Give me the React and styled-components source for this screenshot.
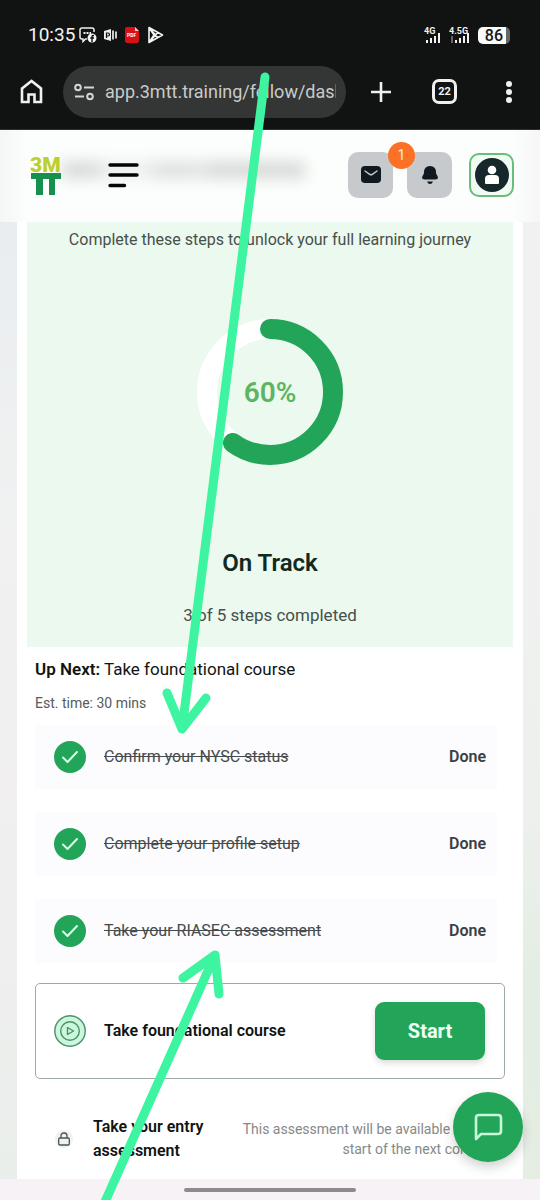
import React from "react";
import styled, { createGlobalStyle } from "styled-components";

const green = "#22a558";
const mint = "#3df5a0";

const GlobalStyle = createGlobalStyle`
  *, *::before, *::after { box-sizing: border-box; }
  body { margin: 0; font-family: Roboto, "Liberation Sans", sans-serif; color: #101413; }
  button, input { font: inherit; }
  p, h1, h2, ul { margin: 0; padding: 0; }
`;

const Page = styled.div`
  position: relative;
  min-height: 100vh;
  display: flex;
  flex-direction: column;
  overflow: hidden;
  background: #f1f1f1;
`;

const StatusBar = styled.div`
  display: flex;
  align-items: center;
  gap: 7px;
  height: 60px;
  padding: 10px 30px 0 28px;
  background: #111212;
  color: #f4f4f4;
  svg { flex: none; }
`;

const Clock = styled.time`
  font-size: 19px;
  line-height: 24px;
  margin-right: -3px;
`;

const StatusEnd = styled.div`
  display: flex;
  align-items: center;
  gap: 8px;
  margin-left: auto;
`;

const Battery = styled.div`
  display: flex;
  align-items: center;
  height: 17px;
  padding: 0 7px;
  border-radius: 5px;
  background: linear-gradient(to right, #fafafa 86%, #666 86%);
  color: #161616;
  font-size: 16px;
  line-height: 17px;
  font-weight: 500;
`;

const BrowserBar = styled.div`
  display: flex;
  align-items: center;
  height: 70px;
  padding: 0 20px 6px;
  border-bottom: 1px solid #2c302e;
  background: #111212;
  color: #f0f0f0;
`;

const PlainButton = styled.button`
  display: flex;
  align-items: center;
  justify-content: center;
  flex: none;
  width: ${(p) => p.$width}px;
  height: 30px;
  padding: 0;
  border: 0;
  background: none;
  color: inherit;
`;

const AddressPill = styled.label`
  display: flex;
  align-items: center;
  gap: 10px;
  flex: 1;
  min-width: 0;
  height: 52px;
  margin: 0 23px 0 20px;
  padding: 0 10px 0 11px;
  border-radius: 26px;
  background: #333634;
  svg { flex: none; }
`;

const Address = styled.input`
  flex: 1;
  min-width: 0;
  padding: 0;
  border: 0;
  outline: 0;
  background: none;
  color: #c9cbca;
  font-size: 18px;
  line-height: 24px;
`;

const BrowserActions = styled.div`
  display: flex;
  align-items: center;
  gap: 40px;
`;

const TabCount = styled.span`
  display: flex;
  align-items: center;
  justify-content: center;
  width: 25px;
  height: 25px;
  border: 3px solid #f0f0f0;
  border-radius: 7px;
  font-size: 11px;
  font-weight: 700;
`;

const AppHeader = styled.header`
  position: relative;
  display: flex;
  align-items: center;
  height: 92px;
  padding: 0 26px 2px 30px;
  background: linear-gradient(to right, #f5f6f5, #fbfefc 28px, #fbfefc calc(100% - 28px), #f6f6f6);
  &::before {
    content: "";
    position: absolute;
    left: 62px;
    top: 31px;
    width: 45%;
    height: 18px;
    background: linear-gradient(to right, #d9dcda 0 12%, #eef0ef 20% 34%, #dfe2e0 40% 52%, #e6e8e7 56%, #d9dcda 62% 100%);
    filter: blur(7px);
  }
`;

const Logo = styled.svg`
  position: relative;
  flex: none;
`;

const MenuButton = styled(PlainButton)`
  position: relative;
  margin-left: 44px;
  color: #050505;
`;

const HeaderActions = styled.div`
  position: relative;
  display: flex;
  align-items: center;
  gap: 14px;
  margin-left: auto;
`;

const TileButton = styled.button`
  position: relative;
  display: flex;
  align-items: center;
  justify-content: center;
  width: 45px;
  height: 46px;
  padding: 0;
  border: 0;
  border-radius: 10px;
  background: #c6cacc;
`;

const AvatarButton = styled(TileButton)`
  height: 44px;
  margin-left: 3px;
  border: 2px solid #6dbb7b;
  background: #f0fbf3;
`;

const Badge = styled.span`
  position: absolute;
  z-index: 1;
  top: -10px;
  right: -22px;
  width: 27px;
  height: 27px;
  border-radius: 50%;
  background: #fb7125;
  color: #ffe9dc;
  font-size: 14px;
  line-height: 27px;
  text-align: center;
`;

const Content = styled.main`
  flex: 1;
  padding: 0 17px;
  background:
    linear-gradient(to bottom, #e9edf0, #f0f1f1 30%, #f1eff0 60%, #eaeeeb) left / 17px 100% no-repeat,
    linear-gradient(to bottom, #f1f1f1, #eef0ee 60%, #e3ede3 80%, #e6eee4) right / 17px 100% no-repeat,
    #fff;
`;

const Card = styled.section`
  padding: 0 10px 16px;
  background: #fff;
`;

const ProgressPanel = styled.div`
  display: flex;
  flex-direction: column;
  align-items: center;
  padding: 6px 0 20px;
  background: #ecf9ee;
  color: #46504c;
  text-align: center;
`;

const PanelText = styled.p`
  font-size: ${(p) => p.$size}px;
  line-height: 24px;
`;

const Ring = styled.svg`
  width: 146px;
  height: 146px;
  margin: 67px 0 82px;
`;

const TrackTitle = styled.h1`
  margin-bottom: 24px;
  color: #12291f;
  font-size: 24px;
  line-height: 32px;
  font-weight: 600;
`;

const Steps = styled.div`
  padding: 8px 8px 0;
`;

const UpNext = styled.h2`
  font-size: 17px;
  line-height: 28px;
  font-weight: 400;
  b { font-weight: 600; }
`;

const Estimate = styled.p`
  margin: 10px 0 12px;
  color: #555b59;
  font-size: 14px;
  line-height: 20px;
`;

const StepList = styled.ul`
  display: flex;
  flex-direction: column;
  gap: 23px;
  list-style: none;
`;

const DoneStep = styled.li`
  display: flex;
  align-items: center;
  gap: 18px;
  height: 64px;
  margin-right: 8px;
  padding: 0 11px 0 19px;
  background: #fcfbfd;
  font-size: 16px;
  line-height: 24px;
  s { color: #454b4d; }
  b { margin-left: auto; color: #3b4043; font-weight: 600; }
`;

const IconCircle = styled.span`
  display: flex;
  align-items: center;
  justify-content: center;
  flex: none;
  width: 32px;
  height: 32px;
  border-radius: 50%;
  background: ${(p) => p.$fill};
`;

const StepName = styled.span`
  font-size: 16px;
  line-height: 24px;
  font-weight: 600;
`;

const CurrentStep = styled.li`
  display: flex;
  align-items: center;
  gap: 18px;
  height: 96px;
  margin-top: -3px;
  padding: 0 19px 0 18px;
  border: 1px solid #9eaba5;
  border-radius: 5px;
  background: #fff;
`;

const StartButton = styled.button`
  width: 110px;
  height: 58px;
  margin-left: auto;
  border: 0;
  border-radius: 9px;
  background: ${green};
  box-shadow: 0 3px 6px #00000026;
  color: #eefff4;
  font-size: 20px;
  font-weight: 700;
`;

const LockedStep = styled.li`
  display: flex;
  align-items: center;
  gap: 20px;
  margin-top: 13px;
  padding: 0 0 0 20px;
`;

const LockBadge = styled.span`
  display: flex;
  align-items: center;
  justify-content: center;
  flex: none;
  width: 18px;
  height: 18px;
  border-radius: 50%;
  background: #eef2f0;
`;

const LockedNote = styled.p`
  flex: 1;
  padding-right: 16px;
  color: #858988;
  font-size: 14px;
  line-height: 20px;
  text-align: right;
`;

const ChatButton = styled.button`
  position: absolute;
  right: 17px;
  bottom: 38px;
  display: flex;
  align-items: center;
  justify-content: center;
  width: 70px;
  height: 70px;
  padding: 0;
  border: 0;
  border-radius: 50%;
  background: ${green};
  box-shadow: 0 5px 12px #00000030;
`;

const GestureBar = styled.div`
  display: flex;
  align-items: center;
  justify-content: center;
  height: 21px;
  background: #f6f2f5;
  &::before {
    content: "";
    width: 32%;
    height: 4px;
    border-radius: 2px;
    background: #8d8b8d;
  }
`;

const Arrows = styled.svg`
  position: absolute;
  inset: 0;
  width: 100%;
  height: 100%;
  pointer-events: none;
`;

const doneSteps = [
  "Confirm your NYSC status",
  "Complete your profile setup",
  "Take your RIASEC assessment",
];

function Signal({ label, width, faint }) {
  return (
    <svg width={width} height="18" viewBox={`0 0 ${width} 18`} fill="#f2f2f2">
      <text x="0" y="8" fontSize="9" fontWeight="700" fontFamily="Roboto, sans-serif">{label}</text>
      {faint && <rect x={width - 19} y="10" width="2" height="7" fill="#666" />}
      <rect x={width - 15} y="14" width="2" height="3" />
      <rect x={width - 11} y="12" width="2" height="5" />
      <rect x={width - 7} y="10" width="2" height="7" />
      <rect x={width - 3} y="7" width="2" height="10" />
    </svg>
  );
}

export default function App() {
  return (
    <Page>
      <GlobalStyle />
      <StatusBar>
        <Clock>10:35</Clock>
        <svg width="18" height="16" viewBox="0 0 18 16" fill="none">
          <path d="M8 12H6.500L4 14.500V12H3Q1 12 1 10V3Q1 1 3 1H13Q15 1 15 3V5" stroke="#eee" strokeWidth="1.500" />
          <path d="M4.500 6H12" stroke="#eee" strokeWidth="1.800" strokeDasharray="2 1" />
          <circle cx="13" cy="11" r="4.500" fill="#f6f6f6" />
          <path d="M15 8.500H14Q13 8.500 13 10V15M11.300 11H15" stroke="#111" strokeWidth="1.400" />
        </svg>
        <svg width="14" height="14" viewBox="0 0 14 14">
          <path d="M0 3L7 1V13L0 11Z" fill="#eee" />
          <path d="M2.500 10V5H4Q5.500 5 5.500 6.500Q5.500 8 4 8H2.500" stroke="#111" strokeWidth="1.200" fill="none" />
          <path d="M8 2.500H10V11.500H8ZM11 3.500H13V10.500H11Z" fill="#ccc" />
        </svg>
        <svg width="15" height="18" viewBox="0 0 15 18">
          <path d="M2 1H10L14 5V15Q14 17 12 17H2Q0 17 0 15V3Q0 1 2 1Z" fill="#d90f18" />
          <path d="M10 1L14 5H10Z" fill="#ffc9c9" />
          <text x="2" y="11" fontSize="5" fontWeight="700" fill="#fff" fontFamily="Roboto, sans-serif">PDF</text>
        </svg>
        <svg width="17" height="18" viewBox="0 0 17 18" fill="none" stroke="#f4f4f4" strokeWidth="1.600" strokeLinejoin="round">
          <path d="M2 1.500L15.500 9L2 16.500ZM2 1.500L11 12M2 16.500L11 6M2 1.500L7 9L2 16.500" />
        </svg>
        <StatusEnd>
          <Signal label="4G" width={17} />
          <Signal label="4.5G" width={21} faint />
          <Battery>86</Battery>
        </StatusEnd>
      </StatusBar>

      <BrowserBar>
        <PlainButton $width={23} aria-label="Home">
          <svg width="23" height="25" viewBox="0 0 23 25" fill="none" stroke="currentColor" strokeWidth="2.600">
            <path d="M2 9.500L11.500 2L21 9.500V23H14.500V15.500H8.500V23H2Z" />
          </svg>
        </PlainButton>
        <AddressPill>
          <svg width="21" height="18" viewBox="0 0 21 18" fill="none" stroke="#d4d6d5" strokeWidth="2">
            <circle cx="4" cy="4.500" r="2.800" />
            <path d="M10 4.500H20M1 13.500H10" />
            <circle cx="16" cy="13.500" r="2.800" />
          </svg>
          <Address aria-label="Address" readOnly value="app.3mtt.training/fellow/dashboard" />
        </AddressPill>
        <BrowserActions>
          <PlainButton $width={23} aria-label="New tab">
            <svg width="22" height="22" viewBox="0 0 22 22" stroke="currentColor" strokeWidth="2.600">
              <path d="M11 1V21M1 11H21" />
            </svg>
          </PlainButton>
          <PlainButton $width={25} aria-label="Tabs"><TabCount>22</TabCount></PlainButton>
          <PlainButton $width={23} aria-label="More">
            <svg width="6" height="22" viewBox="0 0 6 22" fill="currentColor">
              <circle cx="3" cy="3" r="3" /><circle cx="3" cy="11" r="3" /><circle cx="3" cy="19" r="3" />
            </svg>
          </PlainButton>
        </BrowserActions>
      </BrowserBar>

      <AppHeader>
        <Logo width="34" height="49" viewBox="0 -6 34 49">
          <text x="0" y="15" fontSize="21" fontWeight="900" fill="#bccf2f" fontFamily="Roboto, sans-serif">3M</text>
          <path d="M1 16H31V22H25V38H19V22H13V38H6V22H1Z" fill="#15914d" />
        </Logo>
        <MenuButton $width={32} aria-label="Menu">
          <svg width="32" height="26" viewBox="0 0 32 26" stroke="currentColor" strokeWidth="3.400" strokeLinecap="round">
            <path d="M2 3H29M2 13H29M2 23.500H16.500" />
          </svg>
        </MenuButton>
        <HeaderActions>
          <TileButton aria-label="Messages">
            <svg width="20" height="18" viewBox="0 0 20 18">
              <rect width="20" height="17" rx="4" fill="#101820" />
              <path d="M4 5L9 8.500Q10 9 11 8.500L16 5" stroke="#c6cacc" strokeWidth="1.500" fill="none" strokeLinecap="round" />
            </svg>
            <Badge>1</Badge>
          </TileButton>
          <TileButton aria-label="Notifications">
            <svg width="18" height="20" viewBox="0 0 18 20" fill="#101820">
              <path d="M9 1Q15 1 15 7.500Q15 9 16.500 11Q18 14.500 14 14.500H4Q0 14.500 1.500 11Q3 9 3 7.500Q3 1 9 1Z" />
              <path d="M6 16.500H12Q11 19 9 19Q7 19 6 16.500Z" />
            </svg>
          </TileButton>
          <AvatarButton aria-label="Profile">
            <svg width="34" height="34" viewBox="0 0 34 34">
              <circle cx="17" cy="17" r="17" fill="#17282b" />
              <circle cx="17" cy="12" r="4.300" fill="#fff" />
              <path d="M10 25V21Q10 17 14 17H20Q24 17 24 21V25Q24 26 23 26H11Q10 26 10 25Z" fill="#fff" />
            </svg>
          </AvatarButton>
        </HeaderActions>
      </AppHeader>

      <Content>
        <Card>
          <ProgressPanel>
            <PanelText $size={16}>Complete these steps to unlock your full learning journey</PanelText>
            <Ring viewBox="0 0 146 146" fill="none" role="img" aria-label="60% complete">
              <circle cx="73" cy="73" r="63" stroke="#fff" strokeWidth="20" />
              <circle cx="73" cy="73" r="63" stroke={green} strokeWidth="20" strokeLinecap="round" pathLength="100" strokeDasharray="60 40" transform="rotate(-90 73 73)" />
              <text x="73" y="83" textAnchor="middle" fontSize="28" fontWeight="600" fill="#5bb562" fontFamily="Roboto, sans-serif">60%</text>
            </Ring>
            <TrackTitle>On Track</TrackTitle>
            <PanelText $size={17}>3 of 5 steps completed</PanelText>
          </ProgressPanel>
          <Steps>
            <UpNext><b>Up Next:</b> Take foundational course</UpNext>
            <Estimate>Est. time: 30 mins</Estimate>
            <StepList>
              {doneSteps.map((name) => (
                <DoneStep key={name}>
                  <IconCircle $fill={green}>
                    <svg width="18" height="14" viewBox="0 0 18 14" fill="none" stroke="#d8ffe6" strokeWidth="2" strokeLinecap="round" strokeLinejoin="round">
                      <path d="M2 7.500L6.500 12L16 2" />
                    </svg>
                  </IconCircle>
                  <s>{name}</s>
                  <b>Done</b>
                </DoneStep>
              ))}
              <CurrentStep>
                <IconCircle $fill="#cbf7db">
                  <svg width="32" height="32" viewBox="0 0 32 32" fill="none" stroke="#4f8f70" strokeWidth="1.400" strokeLinejoin="round">
                    <circle cx="16" cy="16" r="15.200" />
                    <circle cx="16" cy="16" r="9.300" />
                    <path d="M13.500 12.500L19.500 16L13.500 19.500Z" />
                  </svg>
                </IconCircle>
                <StepName>Take foundational course</StepName>
                <StartButton>Start</StartButton>
              </CurrentStep>
              <LockedStep>
                <LockBadge>
                  <svg width="12" height="14" viewBox="0 0 12 14" fill="none" stroke="#4c5552" strokeWidth="1.300">
                    <rect x="0.700" y="6" width="10.600" height="7" rx="1.200" />
                    <path d="M3 6V3.800Q3 1 6 1Q9 1 9 3.800V6" />
                  </svg>
                </LockBadge>
                <StepName>Take your entry<br />assessment</StepName>
                <LockedNote>This assessment will be available at the<br />start of the next cohort.</LockedNote>
              </LockedStep>
            </StepList>
          </Steps>
        </Card>
      </Content>

      <GestureBar />
      <ChatButton aria-label="Chat">
        <svg width="29" height="28" viewBox="0 0 29 28" fill="none" stroke="#c9f7da" strokeWidth="2.600" strokeLinejoin="round">
          <path d="M2 26V5Q2 2 5 2H24Q27 2 27 5V18Q27 21 24 21H7Z" />
        </svg>
      </ChatButton>
      <Arrows viewBox="0 0 540 1200" preserveAspectRatio="xMidYMin meet" fill="none" stroke={mint} strokeWidth="9" strokeLinecap="round" strokeLinejoin="round" aria-hidden="true">
        <path d="M265 77L182 729M167 693L182 729L206 698" />
        <path d="M104 1204L215 955M183 978L215 955L219 994" />
      </Arrows>
    </Page>
  );
}
